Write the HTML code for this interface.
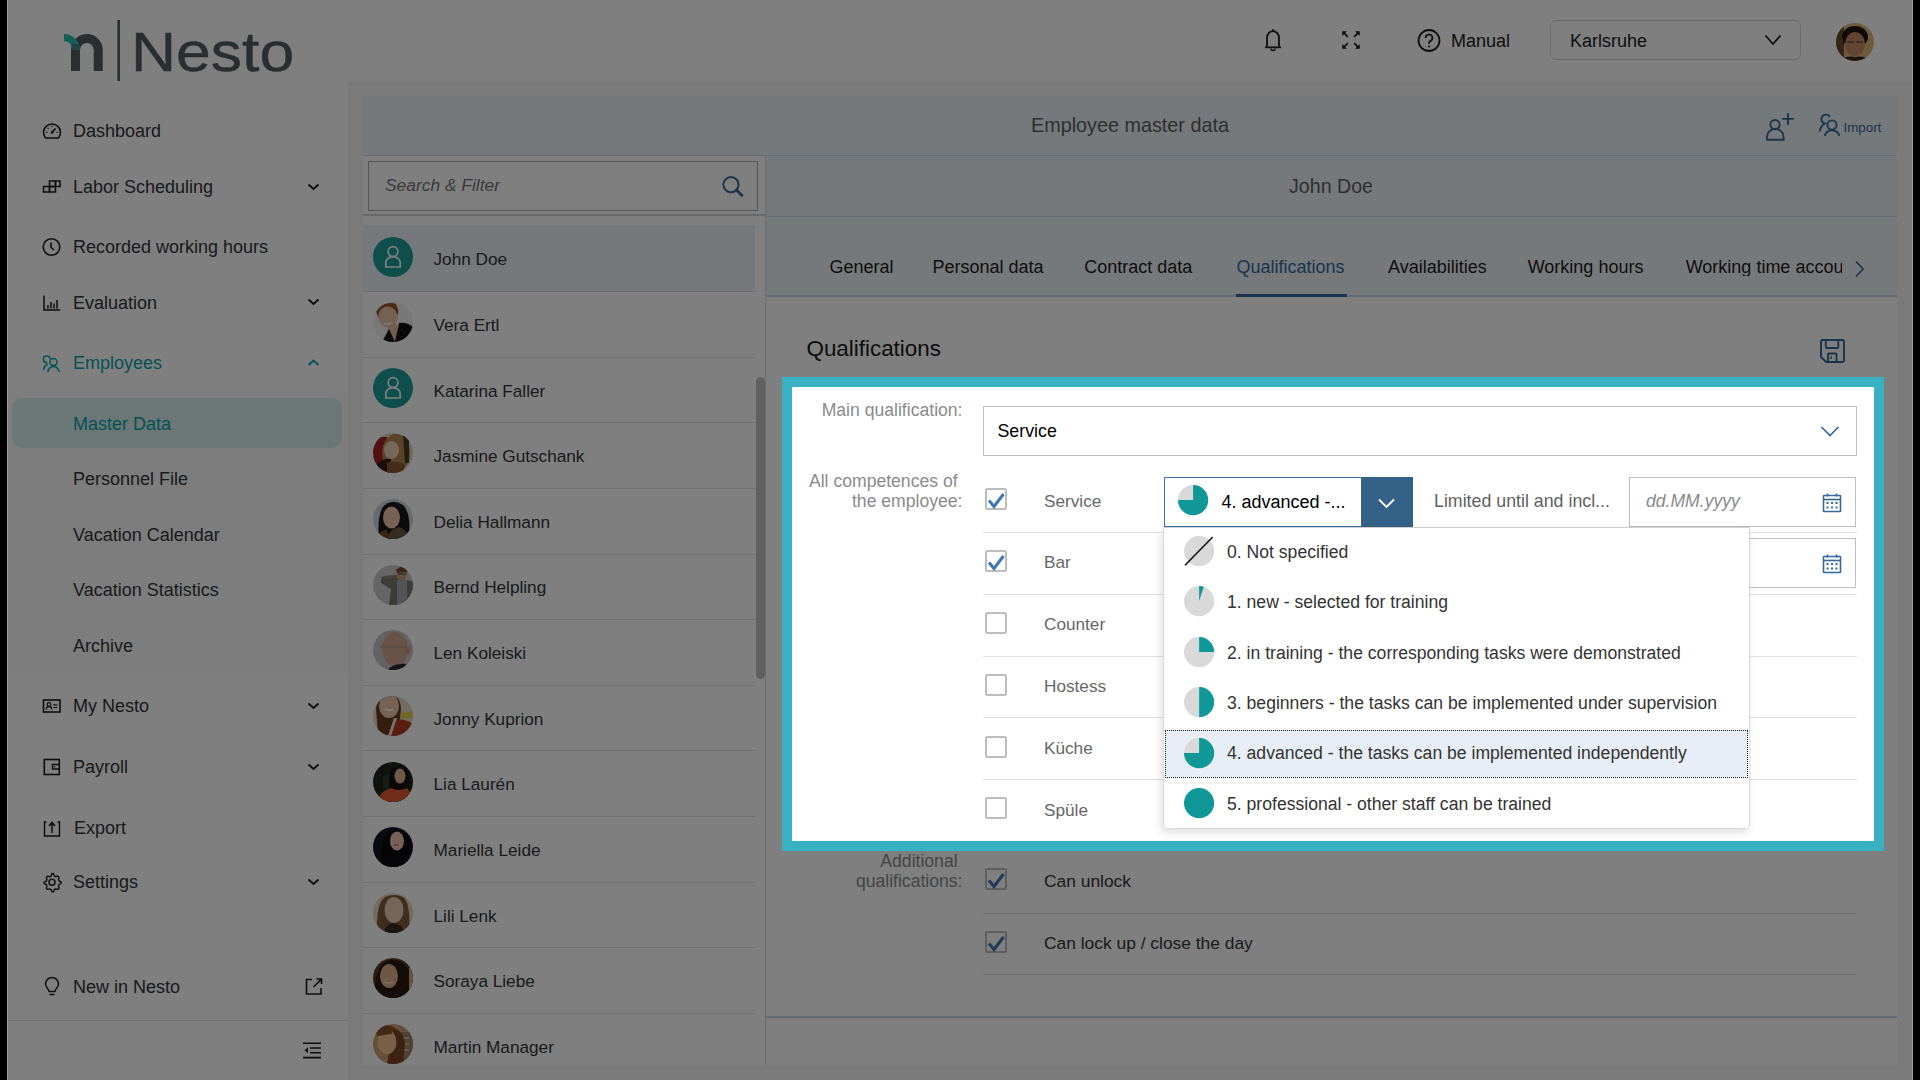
<!DOCTYPE html>
<html><head><meta charset="utf-8"><title>Nesto</title>
<style>
html,body{margin:0;padding:0;width:1920px;height:1080px;overflow:hidden;background:#000;}
body{position:relative;font-family:"Liberation Sans", sans-serif;}
.t{position:absolute;white-space:nowrap;line-height:1;font-family:"Liberation Sans", sans-serif;}
svg{display:block}
</style></head><body>
<div style="position:absolute;left:7.00px;top:0.00px;width:1906.00px;height:1080.00px;background:#fff"></div>
<div style="position:absolute;left:348.00px;top:81.00px;width:1565.00px;height:999.00px;background:#f4f4f4"></div>
<div style="position:absolute;left:7.00px;top:392.00px;width:341.00px;height:283.00px;background:#fbfbfb"></div>
<svg style="position:absolute;left:60.00px;top:18.00px;" width="70" height="66" viewBox="0 0 70 66">
<defs><clipPath id="lgclip"><path d="M4 19.5 A12.5 12.5 0 0 1 16.5 32" fill="none" stroke="#000" stroke-width="7"/></clipPath></defs>
<path d="M15.5 53 V31.9 A11.375 11.375 0 0 1 38.25 31.9 V53" fill="none" stroke="#525d61" stroke-width="9"/>
<path d="M4 19.5 A12.5 12.5 0 0 1 16.5 32" fill="none" stroke="#28bdb9" stroke-width="7"/>
<path d="M4 19.5 A12.5 12.5 0 0 1 16.5 32 V53" fill="none" stroke="#3c7d80" stroke-width="0"/>
<rect x="57.4" y="2" width="2.6" height="61" fill="#525d61"/>
</svg>
<svg style="position:absolute;left:60.00px;top:18.00px;" width="70" height="66" viewBox="0 0 70 66"><path d="M11 26 L20 26 L20 34 L11 34 z" fill="#3e8a8e" clip-path="url(#lgclip2)"/><defs><clipPath id="lgclip2"><path d="M4 16 A16 16 0 0 1 20 32 L13 32 A9 9 0 0 0 4 23 z"/></clipPath></defs></svg>
<div class="t" style="left:130.5px;top:18.6px;font-size:56px;line-height:66px;color:#525d61;-webkit-text-stroke:0.45px #525d61;transform:scaleX(1.115);transform-origin:left">Nesto</div>
<svg style="position:absolute;left:1262.00px;top:27.00px;" width="22" height="26" viewBox="0 0 22 26"><path d="M5 19.5 V10.5 a6 6.3 0 0 1 12 0 V19.5" fill="none" stroke="#1d1d1d" stroke-width="1.8"/><path d="M3 20.3 H19" stroke="#1d1d1d" stroke-width="1.8"/><path d="M9 21.5 a2 2 0 0 0 4 0" fill="none" stroke="#1d1d1d" stroke-width="1.6"/><path d="M11 2.3v2" stroke="#1d1d1d" stroke-width="1.8"/></svg>
<svg style="position:absolute;left:1341.00px;top:30.00px;" width="20" height="20" viewBox="0 0 20 20"><g stroke="#1d1d1d" stroke-width="1.7" fill="none"><path d="M2.2 2.2 L6.8 6.8 M17.8 2.2 L13.2 6.8 M2.2 17.8 L6.8 13.2 M17.8 17.8 L13.2 13.2"/></g><g fill="#1d1d1d"><path d="M1.3 1.3 H6 L1.3 6 z"/><path d="M18.7 1.3 H14 L18.7 6 z"/><path d="M1.3 18.7 H6 L1.3 14 z"/><path d="M18.7 18.7 H14 L18.7 14 z"/></g></svg>
<svg style="position:absolute;left:1416.00px;top:28.00px;" width="26" height="26" viewBox="0 0 26 26"><circle cx="13" cy="12.5" r="10.5" fill="none" stroke="#1d1d1d" stroke-width="1.8"/><path d="M9.6 10 a3.4 3.4 0 1 1 4.6 3.1 c-0.9 0.4 -1.2 1 -1.2 2 v0.6" fill="none" stroke="#1d1d1d" stroke-width="1.7"/><circle cx="13" cy="18.4" r="1" fill="#1d1d1d"/></svg>
<div class="t " style="left:1451.00px;top:31.76px;font-size:18px;color:#1d1d1d;">Manual</div>
<div style="position:absolute;left:1550.00px;top:20.00px;width:251.00px;height:40.00px;box-sizing:border-box;border:1px solid #d6d6d6;border-radius:6px;background:#fff"></div>
<div class="t " style="left:1570.00px;top:31.76px;font-size:18px;color:#1d1d1d;">Karlsruhe</div>
<svg style="position:absolute;left:1764.00px;top:34.00px;" width="18" height="12" viewBox="0 0 18 12"><path d="M1.5 1.5 L9 10 L16.5 1.5" fill="none" stroke="#1d1d1d" stroke-width="1.8"/></svg>
<svg style="position:absolute;left:1836.00px;top:23.00px;" width="38" height="38" viewBox="0 0 38 38"><defs><clipPath id="uav"><circle cx="19" cy="19" r="19"/></clipPath></defs><g clip-path="url(#uav)"><rect width="38" height="38" fill="#d9b878"/><rect x="0" y="0" width="8" height="38" fill="#6a4a2a"/><ellipse cx="19" cy="14" rx="13" ry="11" fill="#1e1410"/><ellipse cx="19" cy="21" rx="10" ry="12" fill="#c48a66"/><path d="M11 19 h7 M20 19 h7" stroke="#3a2a22" stroke-width="1.2"/><path d="M2 38 Q10 32 19 34 Q28 32 36 38 z" fill="#3a2418"/></g></svg>
<div style="position:absolute;left:12.00px;top:398.00px;width:330.00px;height:50.00px;background:#d4efed;border-radius:10px"></div>
<div class="t " style="left:73.00px;top:122.26px;font-size:18px;color:#32363a;">Dashboard</div>
<div class="t " style="left:73.00px;top:177.76px;font-size:18px;color:#32363a;">Labor Scheduling</div>
<svg style="position:absolute;left:306.00px;top:181.50px;" width="15" height="10" viewBox="0 0 15 10"><path d="M2.5 2.5 L7.5 7 L12.5 2.5" fill="none" stroke="#1d1d1d" stroke-width="2"/></svg>
<div class="t " style="left:73.00px;top:238.06px;font-size:18px;color:#32363a;">Recorded working hours</div>
<div class="t " style="left:73.00px;top:293.66px;font-size:18px;color:#32363a;">Evaluation</div>
<svg style="position:absolute;left:306.00px;top:297.40px;" width="15" height="10" viewBox="0 0 15 10"><path d="M2.5 2.5 L7.5 7 L12.5 2.5" fill="none" stroke="#1d1d1d" stroke-width="2"/></svg>
<div class="t " style="left:73.00px;top:354.16px;font-size:18px;color:#0aa4ad;">Employees</div>
<svg style="position:absolute;left:306.00px;top:357.90px;" width="15" height="10" viewBox="0 0 15 10"><path d="M2.5 7 L7.5 2.5 L12.5 7" fill="none" stroke="#0aa4ad" stroke-width="2"/></svg>
<div class="t " style="left:73.00px;top:414.76px;font-size:18px;color:#0aa4ad;">Master Data</div>
<div class="t " style="left:73.00px;top:470.36px;font-size:18px;color:#32363a;">Personnel File</div>
<div class="t " style="left:73.00px;top:525.56px;font-size:18px;color:#32363a;">Vacation Calendar</div>
<div class="t " style="left:73.00px;top:581.16px;font-size:18px;color:#32363a;">Vacation Statistics</div>
<div class="t " style="left:73.00px;top:636.76px;font-size:18px;color:#32363a;">Archive</div>
<div class="t " style="left:73.00px;top:697.16px;font-size:18px;color:#32363a;">My Nesto</div>
<svg style="position:absolute;left:306.00px;top:700.90px;" width="15" height="10" viewBox="0 0 15 10"><path d="M2.5 2.5 L7.5 7 L12.5 2.5" fill="none" stroke="#1d1d1d" stroke-width="2"/></svg>
<div class="t " style="left:73.00px;top:757.96px;font-size:18px;color:#32363a;">Payroll</div>
<svg style="position:absolute;left:306.00px;top:761.70px;" width="15" height="10" viewBox="0 0 15 10"><path d="M2.5 2.5 L7.5 7 L12.5 2.5" fill="none" stroke="#1d1d1d" stroke-width="2"/></svg>
<div class="t " style="left:74.00px;top:818.56px;font-size:18px;color:#32363a;">Export</div>
<div class="t " style="left:73.00px;top:873.06px;font-size:18px;color:#32363a;">Settings</div>
<svg style="position:absolute;left:306.00px;top:876.80px;" width="15" height="10" viewBox="0 0 15 10"><path d="M2.5 2.5 L7.5 7 L12.5 2.5" fill="none" stroke="#1d1d1d" stroke-width="2"/></svg>
<div class="t " style="left:73.00px;top:977.96px;font-size:18px;color:#32363a;">New in Nesto</div>
<svg style="position:absolute;left:41.00px;top:120.00px;" width="22" height="22" viewBox="0 0 22 22"><path d="M4.5 18 a8.5 8.5 0 1 1 13 0 z" fill="none" stroke="#1d1d1d" stroke-width="1.6" stroke-linejoin="round"/><path d="M11 12.5 L14.5 8.5" stroke="#1d1d1d" stroke-width="1.8"/><circle cx="11" cy="12.5" r="1.3" fill="#1d1d1d"/><path d="M11 5.8v1.2 M6.8 7.8l.8.8 M5.3 12.3h1.2 M15.5 12.3h1.2" stroke="#1d1d1d" stroke-width="1.2"/></svg>
<svg style="position:absolute;left:41.00px;top:176.00px;" width="22" height="22" viewBox="0 0 22 22"><g fill="none" stroke="#1d1d1d" stroke-width="1.5"><rect x="2.5" y="10.5" width="6" height="5.5"/><rect x="8.5" y="10.5" width="6" height="5.5"/><rect x="8.5" y="5" width="6" height="5.5"/><rect x="14.5" y="5" width="4.5" height="5.5"/></g></svg>
<svg style="position:absolute;left:41.00px;top:236.00px;" width="22" height="22" viewBox="0 0 22 22"><circle cx="10.5" cy="11" r="8.3" fill="none" stroke="#1d1d1d" stroke-width="1.6"/><path d="M10 6.5 V11.5 L13 14" fill="none" stroke="#1d1d1d" stroke-width="1.6"/></svg>
<svg style="position:absolute;left:41.00px;top:292.00px;" width="22" height="22" viewBox="0 0 22 22"><path d="M3 3.5 V18 H19" fill="none" stroke="#1d1d1d" stroke-width="1.5"/><path d="M7 13v3.5 M10 10v6.5 M13 11.5v5 M16 8v8.5" stroke="#1d1d1d" stroke-width="1.5"/></svg>
<svg style="position:absolute;left:41.00px;top:352.00px;" width="22" height="22" viewBox="0 0 22 22"><g fill="none" stroke="#0aa4ad" stroke-width="1.5"><path d="M9 7 a3.3 3.3 0 1 0 -3 3.6 M2.5 18 c0.5 -3 2 -5 4.5 -6"/><circle cx="12.5" cy="10" r="3.5"/><path d="M7 20 a5.5 5.5 0 0 1 11 0"/></g></svg>
<svg style="position:absolute;left:41.00px;top:695.00px;" width="22" height="22" viewBox="0 0 22 22"><rect x="2.5" y="5" width="16.5" height="12" fill="none" stroke="#1d1d1d" stroke-width="1.6"/><circle cx="8" cy="9.5" r="1.8" fill="none" stroke="#1d1d1d" stroke-width="1.2"/><path d="M5.2 14.5 a2.8 2.8 0 0 1 5.6 0" fill="none" stroke="#1d1d1d" stroke-width="1.2"/><path d="M12.3 9.8h4 M12.3 12.5h4" stroke="#1d1d1d" stroke-width="1.2"/></svg>
<svg style="position:absolute;left:41.00px;top:756.00px;" width="22" height="22" viewBox="0 0 22 22"><rect x="3.3" y="3.5" width="15" height="15" fill="none" stroke="#1d1d1d" stroke-width="1.6"/><path d="M18.3 8.5 H11.5 V13 H18.3" fill="none" stroke="#1d1d1d" stroke-width="1.4"/><circle cx="13.5" cy="10.8" r=".8" fill="#1d1d1d"/></svg>
<svg style="position:absolute;left:41.00px;top:817.00px;" width="22" height="22" viewBox="0 0 22 22"><path d="M5.5 5 H3.5 V19 H18.5 V5 H16.5" fill="none" stroke="#1d1d1d" stroke-width="1.5"/><path d="M11 16 V6 M8 9 L11 5.5 L14 9" fill="none" stroke="#1d1d1d" stroke-width="1.5"/></svg>
<svg style="position:absolute;left:41.00px;top:871.00px;" width="22" height="22" viewBox="0 0 22 22"><path d="M11 2.5 l1.6 .2 .6 2.1 1.6 .9 2.1 -.7 1.1 1.2 -.5 2.1 .6 1.7 2 .9 v1.7 l-2 .8 -.6 1.7 .6 2.1 -1.2 1.2 -2.1 -.6 -1.6 .9 -.6 2.1 h-1.7 l-.7 -2.1 -1.6 -.9 -2.1 .6 -1.2 -1.2 .6 -2.1 -.6 -1.6 -2.1 -.8 v-1.7 l2.1 -.8 .6 -1.7 -.6 -2.1 1.2 -1.2 2.1 .6 1.6 -.9 .7 -2.1 z" fill="none" stroke="#1d1d1d" stroke-width="1.4" stroke-linejoin="round"/><circle cx="11" cy="11.3" r="3" fill="none" stroke="#1d1d1d" stroke-width="1.5"/></svg>
<svg style="position:absolute;left:41.00px;top:976.00px;" width="22" height="22" viewBox="0 0 22 22"><path d="M8 15.5 c0 -2.5 -3.5 -4 -3.5 -7.5 a6.5 6.5 0 0 1 13 0 c0 3.5 -3.5 5 -3.5 7.5 z" fill="none" stroke="#1d1d1d" stroke-width="1.5" stroke-linejoin="round"/><path d="M8.5 18.5 h5" stroke="#1d1d1d" stroke-width="1.5"/></svg>
<svg style="position:absolute;left:303.00px;top:976.00px;" width="22" height="22" viewBox="0 0 22 22"><path d="M9 3.5 H3.5 V18 H18 V12" fill="none" stroke="#1d1d1d" stroke-width="1.6"/><path d="M10.5 11 L18 3.5 M13.5 3 H18.5 V8" fill="none" stroke="#1d1d1d" stroke-width="1.6"/></svg>
<div style="position:absolute;left:7.00px;top:1020.00px;width:341.00px;height:1.00px;background:#e2e2e2"></div>
<svg style="position:absolute;left:301.00px;top:1040.00px;" width="24" height="22" viewBox="0 0 24 22"><path d="M2 3.2 H20 M9 8 H20 M9 12.7 H20 M2 17.6 H20" stroke="#1d1d1d" stroke-width="1.6"/><path d="M7 7.3 L3.5 10.3 L7 13.3 z" fill="#1d1d1d"/></svg>
<div style="position:absolute;left:363.00px;top:96.00px;width:1534.00px;height:60.00px;background:#edf3f9;border-bottom:1px solid #cbd8ea;box-sizing:border-box"></div>
<div class="t " style="left:1031.00px;top:116.14px;font-size:19.8px;color:#5b5f63;">Employee master data</div>
<svg style="position:absolute;left:1762.00px;top:110.00px;" width="36" height="34" viewBox="0 0 36 34"><g fill="none" stroke="#35689c" stroke-width="1.9"><circle cx="13" cy="14.6" r="4.6"/><path d="M5 29.8 V27 a8.3 8.3 0 0 1 16.6 0 V29.8 z"/><path d="M26 3 V14.8 M20.2 8.9 H31.8"/></g></svg>
<svg style="position:absolute;left:1815.00px;top:112.00px;" width="30" height="28" viewBox="0 0 30 28"><g fill="none" stroke="#35689c" stroke-width="1.9"><circle cx="17" cy="13" r="4.6"/><path d="M9.8 24 a7.5 7.5 0 0 1 14.5 0"/><path d="M14.8 5 a4.5 4.5 0 1 0 -5 6.5 c-2.5 1.2 -4.5 4 -5 8"/></g></svg>
<div class="t " style="left:1843.50px;top:121.36px;font-size:13.4px;color:#35689c;">Import</div>
<div style="position:absolute;left:363.00px;top:156.00px;width:402.00px;height:909.00px;background:#fff"></div>
<div style="position:absolute;left:765.00px;top:156.00px;width:1.00px;height:909.00px;background:#d9d9d9"></div>
<div style="position:absolute;left:368px;top:161px;width:390px;height:50px;box-sizing:border-box;border:1px solid #a9abad;background:#fff"></div>
<div class="t " style="left:385.00px;top:176.87px;font-size:17.4px;color:#74777a;font-style:italic">Search &amp; Filter</div>
<svg style="position:absolute;left:718.00px;top:172.00px;" width="30" height="30" viewBox="0 0 30 30"><circle cx="13" cy="12.6" r="7.6" fill="none" stroke="#35689c" stroke-width="2"/><path d="M18.5 18 L24 23.5" stroke="#35689c" stroke-width="2.6" stroke-linecap="round"/></svg>
<div style="position:absolute;left:363.00px;top:214.00px;width:402.00px;height:2.00px;background:#cfd1d3"></div>
<div style="position:absolute;left:363.00px;top:225.30px;width:391.50px;height:66.60px;background:#edf3f9"></div>
<div style="position:absolute;left:373px;top:236.61px;width:40px;height:40px;border-radius:50%;background:#1c9e9c"></div>
<svg style="position:absolute;left:373.00px;top:236.61px;" width="40" height="40" viewBox="0 0 40 40"><g fill="none" stroke="#fff" stroke-width="1.7"><circle cx="20" cy="14.6" r="4.9"/><path d="M12.8 30 V25.5 a7.2 5.8 0 0 1 14.4 0 V30 z"/></g></svg>
<div class="t " style="left:433.50px;top:251.34px;font-size:17.2px;color:#32363a;">John Doe</div>
<div style="position:absolute;left:363.00px;top:291.02px;width:391.50px;height:1.00px;background:#e1e1e1"></div>
<svg style="position:absolute;left:373.00px;top:302.23px;" width="40" height="40" viewBox="0 0 40 40"><defs><clipPath id="avc1"><circle cx="20" cy="20" r="20"/></clipPath></defs><g clip-path="url(#avc1)"><rect width="40" height="40" fill="#f0f0f0"/><path d="M3 10 Q8 0 20 1 Q26 2 25 12 L22 18 L6 16 z" fill="#9a5232"/><ellipse cx="15" cy="15" rx="9.5" ry="10.5" fill="#eac2a6" transform="rotate(-15 15 15)"/><path d="M11 21 q4 3 8 -1" stroke="#fff" stroke-width="1.5" fill="none"/><path d="M15 24 L24 22 L26 40 L14 40 z" fill="#e6b898"/><path d="M9 40 L16 27 L22 40 z M22 40 L26 21 Q34 20 40 25 V40 z" fill="#121212"/></g></svg>
<div class="t " style="left:433.50px;top:316.96px;font-size:17.2px;color:#32363a;">Vera Ertl</div>
<div style="position:absolute;left:363.00px;top:356.64px;width:391.50px;height:1.00px;background:#e1e1e1"></div>
<div style="position:absolute;left:373px;top:367.85px;width:40px;height:40px;border-radius:50%;background:#1c9e9c"></div>
<svg style="position:absolute;left:373.00px;top:367.85px;" width="40" height="40" viewBox="0 0 40 40"><g fill="none" stroke="#fff" stroke-width="1.7"><circle cx="20" cy="14.6" r="4.9"/><path d="M12.8 30 V25.5 a7.2 5.8 0 0 1 14.4 0 V30 z"/></g></svg>
<div class="t " style="left:433.50px;top:382.58px;font-size:17.2px;color:#32363a;">Katarina Faller</div>
<div style="position:absolute;left:363.00px;top:422.26px;width:391.50px;height:1.00px;background:#e1e1e1"></div>
<svg style="position:absolute;left:373.00px;top:433.47px;" width="40" height="40" viewBox="0 0 40 40"><defs><clipPath id="avc3"><circle cx="20" cy="20" r="20"/></clipPath></defs><g clip-path="url(#avc3)"><rect width="40" height="40" fill="#ddd4bc"/><path d="M0 4 H14 L12 30 L4 40 H0 z" fill="#a82226"/><ellipse cx="23" cy="20" rx="14" ry="19" fill="#b5864e"/><path d="M30 2 L36 4 L36 30 L32 30 z" fill="#4a3a2a"/><ellipse cx="18.5" cy="17" rx="7.5" ry="9" fill="#ecd0b0"/><path d="M2 34 Q8 24 18 26 L16 40 H2 z" fill="#3a1818"/><path d="M14 30 Q24 26 32 32 L30 40 L14 40 z" fill="#8a5a36"/></g></svg>
<div class="t " style="left:433.50px;top:448.20px;font-size:17.2px;color:#32363a;">Jasmine Gutschank</div>
<div style="position:absolute;left:363.00px;top:487.88px;width:391.50px;height:1.00px;background:#e1e1e1"></div>
<svg style="position:absolute;left:373.00px;top:499.09px;" width="40" height="40" viewBox="0 0 40 40"><defs><clipPath id="avc4"><circle cx="20" cy="20" r="20"/></clipPath></defs><g clip-path="url(#avc4)"><rect width="40" height="40" fill="#cfd6de"/><path d="M6 40 Q4 20 9 9 Q18 -2 30 6 Q38 14 36 36 L30 40 z" fill="#16161d"/><ellipse cx="18.5" cy="18.5" rx="8.5" ry="11" fill="#ecc2a8"/><path d="M14 40 Q16 30 26 28 Q34 30 36 40 z" fill="#6b5a3c"/><path d="M6 34 L14 30 L16 40 L8 40 z" fill="#7a4a26"/></g></svg>
<div class="t " style="left:433.50px;top:513.82px;font-size:17.2px;color:#32363a;">Delia Hallmann</div>
<div style="position:absolute;left:363.00px;top:553.50px;width:391.50px;height:1.00px;background:#e1e1e1"></div>
<svg style="position:absolute;left:373.00px;top:564.71px;" width="40" height="40" viewBox="0 0 40 40"><defs><clipPath id="avc5"><circle cx="20" cy="20" r="20"/></clipPath></defs><g clip-path="url(#avc5)"><rect width="40" height="40" fill="#cbcbcb"/><path d="M8 12 Q14 10 24 10 L26 15 L10 16 z" fill="#8a8272"/><path d="M8 14 L26 14 L40 16 L40 40 L16 40 L18 24 L8 18 z" fill="#7d7972"/><path d="M24 15 L34 15 L34 40 L24 40 z" fill="#a6a8b0"/><ellipse cx="29" cy="9" rx="5.5" ry="6.5" fill="#c7a086"/><path d="M23 5 Q28 -1 35 4 L34 7 L24 8 z" fill="#7a4a2a"/><path d="M25 9 h8" stroke="#333" stroke-width="0.8"/></g></svg>
<div class="t " style="left:433.50px;top:579.44px;font-size:17.2px;color:#32363a;">Bernd Helpling</div>
<div style="position:absolute;left:363.00px;top:619.12px;width:391.50px;height:1.00px;background:#e1e1e1"></div>
<svg style="position:absolute;left:373.00px;top:630.33px;" width="40" height="40" viewBox="0 0 40 40"><defs><clipPath id="avc6"><circle cx="20" cy="20" r="20"/></clipPath></defs><g clip-path="url(#avc6)"><rect width="40" height="40" fill="#c6c6c6"/><ellipse cx="22" cy="19" rx="13" ry="17" fill="#d2a58e"/><ellipse cx="35" cy="20" rx="2.5" ry="4" fill="#c99a84"/><path d="M7 17 H34" stroke="#8d8d8d" stroke-width="0.9"/><path d="M14 40 Q20 34 28 34 Q34 32 36 40 z" fill="#2b2b2b"/><path d="M8 36 L16 34 L16 40 L10 40 z" fill="#b9c0c6"/></g></svg>
<div class="t " style="left:433.50px;top:645.06px;font-size:17.2px;color:#32363a;">Len Koleiski</div>
<div style="position:absolute;left:363.00px;top:684.74px;width:391.50px;height:1.00px;background:#e1e1e1"></div>
<svg style="position:absolute;left:373.00px;top:695.95px;" width="40" height="40" viewBox="0 0 40 40"><defs><clipPath id="avc7"><circle cx="20" cy="20" r="20"/></clipPath></defs><g clip-path="url(#avc7)"><rect width="40" height="40" fill="#e6d8c2"/><path d="M28 17 L40 15 L40 22 L28 23 z" fill="#e2cf48"/><path d="M5 40 L3 12 Q6 -2 18 -1 Q28 0 28 14 L26 30 L14 40 z" fill="#6a3a1e"/><ellipse cx="16" cy="10" rx="10" ry="12" fill="#efc6a6"/><path d="M12 13 q4 3 8 0" stroke="#fff" stroke-width="1.6" fill="none"/><path d="M16 40 L22 24 Q32 22 40 28 V40 z" fill="#b53a24"/><path d="M15 40 L21 22 L24 22 L18 40 z" fill="#ede4d8"/></g></svg>
<div class="t " style="left:433.50px;top:710.68px;font-size:17.2px;color:#32363a;">Jonny Kuprion</div>
<div style="position:absolute;left:363.00px;top:750.36px;width:391.50px;height:1.00px;background:#e1e1e1"></div>
<svg style="position:absolute;left:373.00px;top:761.57px;" width="40" height="40" viewBox="0 0 40 40"><defs><clipPath id="avc8"><circle cx="20" cy="20" r="20"/></clipPath></defs><g clip-path="url(#avc8)"><rect width="40" height="40" fill="#1b2519"/><path d="M16 40 Q14 20 18 8 Q26 0 34 8 Q38 20 34 40 z" fill="#17100c"/><ellipse cx="27" cy="14" rx="5.5" ry="7.5" fill="#e2b292"/><path d="M4 40 Q8 28 18 26 Q26 30 34 26 Q38 30 40 40 z" fill="#e05a34"/><path d="M10 14 L16 12 L16 26 L10 26 z" fill="#2e3a30"/></g></svg>
<div class="t " style="left:433.50px;top:776.30px;font-size:17.2px;color:#32363a;">Lia Laur&eacute;n</div>
<div style="position:absolute;left:363.00px;top:815.98px;width:391.50px;height:1.00px;background:#e1e1e1"></div>
<svg style="position:absolute;left:373.00px;top:827.19px;" width="40" height="40" viewBox="0 0 40 40"><defs><clipPath id="avc9"><circle cx="20" cy="20" r="20"/></clipPath></defs><g clip-path="url(#avc9)"><rect width="40" height="40" fill="#101325"/><path d="M8 30 Q8 6 22 2 Q36 2 38 20 L36 40 L12 40 z" fill="#09090e"/><ellipse cx="24" cy="14" rx="7" ry="9.5" fill="#efc0ae"/><path d="M21 18 h5" stroke="#c0404a" stroke-width="1.2"/><path d="M6 40 Q12 28 24 28 Q34 28 40 36 V40 z" fill="#0d0d10"/></g></svg>
<div class="t " style="left:433.50px;top:841.92px;font-size:17.2px;color:#32363a;">Mariella Leide</div>
<div style="position:absolute;left:363.00px;top:881.60px;width:391.50px;height:1.00px;background:#e1e1e1"></div>
<svg style="position:absolute;left:373.00px;top:892.81px;" width="40" height="40" viewBox="0 0 40 40"><defs><clipPath id="avc10"><circle cx="20" cy="20" r="20"/></clipPath></defs><g clip-path="url(#avc10)"><rect width="40" height="40" fill="#e6d6b8"/><path d="M4 40 Q3 10 12 4 Q21 0 30 4 Q38 10 36 40 z" fill="#7d5c3a"/><ellipse cx="21" cy="17" rx="9.5" ry="13" fill="#edcbb2"/><path d="M10 40 Q14 30 20 30 Q28 30 32 40 z" fill="#3a2a22"/></g></svg>
<div class="t " style="left:433.50px;top:907.54px;font-size:17.2px;color:#32363a;">Lili Lenk</div>
<div style="position:absolute;left:363.00px;top:947.22px;width:391.50px;height:1.00px;background:#e1e1e1"></div>
<svg style="position:absolute;left:373.00px;top:958.43px;" width="40" height="40" viewBox="0 0 40 40"><defs><clipPath id="avc11"><circle cx="20" cy="20" r="20"/></clipPath></defs><g clip-path="url(#avc11)"><rect width="40" height="40" fill="#5a3b24"/><path d="M2 40 Q0 8 16 2 Q34 0 38 20 L36 40 z" fill="#2c180e"/><ellipse cx="16" cy="18" rx="9" ry="12" fill="#dcaf8e"/><path d="M12 24 q4 2.5 8 0" stroke="#f5e6dc" stroke-width="1.2" fill="none"/><path d="M36 10 L40 10 L40 40 L36 40 z" fill="#c9a888"/></g></svg>
<div class="t " style="left:433.50px;top:973.16px;font-size:17.2px;color:#32363a;">Soraya Liebe</div>
<div style="position:absolute;left:363.00px;top:1012.84px;width:391.50px;height:1.00px;background:#e1e1e1"></div>
<svg style="position:absolute;left:373.00px;top:1024.05px;" width="40" height="40" viewBox="0 0 40 40"><defs><clipPath id="avc12"><circle cx="20" cy="20" r="20"/></clipPath></defs><g clip-path="url(#avc12)"><rect width="40" height="40" fill="#caa072"/><path d="M28 8 L40 8 L40 40 L28 40 z" fill="#9b8468"/><path d="M30 14 h6 M30 20 h6 M30 26 h6" stroke="#d8c8a8" stroke-width="1.5"/><path d="M14 40 Q18 16 20 4 Q30 6 32 20 L30 40 z" fill="#7a4222"/><ellipse cx="14" cy="18" rx="9.5" ry="12.5" fill="#efc08e"/><path d="M2 4 Q10 -2 22 4 L18 10 L4 12 z" fill="#8a4e2a"/></g></svg>
<div class="t " style="left:433.50px;top:1038.78px;font-size:17.2px;color:#32363a;">Martin Manager</div>
<div style="position:absolute;left:755.50px;top:377.00px;width:9.50px;height:302.00px;background:#c0c0c0;border-radius:5px"></div>
<div style="position:absolute;left:766.00px;top:156.00px;width:1131.00px;height:909.00px;background:#fff"></div>
<div style="position:absolute;left:766.00px;top:156.00px;width:1131.00px;height:61.00px;background:#edf3f9;border-bottom:1px solid #cbd8ea;box-sizing:border-box"></div>
<div class="t" style="left:831.00px;width:1000px;text-align:center;top:176.71px;font-size:19.6px;color:#5b5f63;">John Doe</div>
<div style="position:absolute;left:766.00px;top:217.00px;width:1131.00px;height:80.00px;background:#edf3f9;border-bottom:2px solid #cbd8ea;box-sizing:border-box"></div>
<div class="t " style="left:829.50px;top:258.06px;font-size:18px;color:#1d1d1d;">General</div>
<div class="t " style="left:932.50px;top:258.06px;font-size:18px;color:#1d1d1d;">Personal data</div>
<div class="t " style="left:1084.30px;top:258.06px;font-size:18px;color:#1d1d1d;">Contract data</div>
<div class="t " style="left:1236.50px;top:258.06px;font-size:18px;color:#35689c;">Qualifications</div>
<div class="t " style="left:1388.00px;top:258.06px;font-size:18px;color:#1d1d1d;">Availabilities</div>
<div class="t " style="left:1527.70px;top:258.06px;font-size:18px;color:#1d1d1d;">Working hours</div>
<div class="t" style="left:1685.7px;top:257.96px;font-size:18px;color:#1d1d1d;width:156px;overflow:hidden">Working time accou</div>
<div style="position:absolute;left:1236.00px;top:294.00px;width:111.00px;height:3.00px;background:#35689c"></div>
<svg style="position:absolute;left:1852.00px;top:258.00px;" width="14" height="22" viewBox="0 0 14 22"><path d="M4 3.5 L11 11 L4 18.5" fill="none" stroke="#35689c" stroke-width="1.7"/></svg>
<div class="t " style="left:806.50px;top:338.24px;font-size:22.4px;color:#1a1a1a;">Qualifications</div>
<svg style="position:absolute;left:1818.00px;top:336.00px;" width="28" height="28" viewBox="0 0 28 28"><g fill="none" stroke="#35689c" stroke-width="1.9" stroke-linejoin="round"><path d="M4.5 4 H24.5 a1.5 1.5 0 0 1 1.5 1.5 V24.5 a1.5 1.5 0 0 1 -1.5 1.5 H8.2 L3 21 V5.5 A1.5 1.5 0 0 1 4.5 4 z"/><rect x="7.8" y="4" width="12.5" height="8" rx="1"/><rect x="10" y="17.5" width="8.5" height="8.5" rx="1"/></g><path d="M13 20.2v2.8" stroke="#35689c" stroke-width="1.6"/></svg>
<div style="position:absolute;left:766.00px;top:1016.00px;width:1131.00px;height:1.50px;background:#c4d2e4"></div>
<div class="t" style="right:957.50px;top:852.60px;font-size:17.6px;color:#8a8b8c;">Additional&nbsp;</div>
<div class="t" style="right:957.50px;top:873.10px;font-size:17.6px;color:#8a8b8c;">qualifications:</div>
<div style="position:absolute;left:985px;top:868.40px;width:22px;height:22px;box-sizing:border-box;border:2px solid #bdbdbd;border-radius:2px;background:#fff"></div>
<svg style="position:absolute;left:985.00px;top:868.40px;" width="22" height="22" viewBox="0 0 22 22"><path d="M4 12.5 L9 18.5 L18.5 6" fill="none" stroke="#3d78b4" stroke-width="3" stroke-linejoin="miter"/></svg>
<div class="t " style="left:1044.00px;top:872.87px;font-size:17.4px;color:#32363a;">Can unlock</div>
<div style="position:absolute;left:983.00px;top:912.60px;width:874.00px;height:1.00px;background:#e1e1e1"></div>
<div style="position:absolute;left:985px;top:930.70px;width:22px;height:22px;box-sizing:border-box;border:2px solid #bdbdbd;border-radius:2px;background:#fff"></div>
<svg style="position:absolute;left:985.00px;top:930.70px;" width="22" height="22" viewBox="0 0 22 22"><path d="M4 12.5 L9 18.5 L18.5 6" fill="none" stroke="#3d78b4" stroke-width="3" stroke-linejoin="miter"/></svg>
<div class="t " style="left:1044.00px;top:934.87px;font-size:17.4px;color:#32363a;">Can lock up / close the day</div>
<div style="position:absolute;left:983.00px;top:973.60px;width:874.00px;height:1.00px;background:#e1e1e1"></div>
<div style="position:absolute;left:782px;top:377.4px;width:1102px;height:473.4px;box-sizing:border-box;border:10px solid #38b2c3;box-shadow:0 0 0 3000px rgba(0,0,0,0.5);z-index:50"></div>
<div id="hl" style="position:absolute;left:0;top:0;width:1920px;height:1080px;z-index:60;pointer-events:none">
<div style="position:absolute;left:792.00px;top:387.40px;width:1082.00px;height:453.00px;background:#fff"></div>
<div class="t" style="right:957.50px;top:402.20px;font-size:17.6px;color:#8a8b8c;">Main qualification:</div>
<div class="t" style="right:957.50px;top:473.00px;font-size:17.6px;color:#8a8b8c;">All competences of&nbsp;</div>
<div class="t" style="right:957.50px;top:492.80px;font-size:17.6px;color:#8a8b8c;">the employee:</div>
<div style="position:absolute;left:983px;top:406px;width:873.5px;height:50px;box-sizing:border-box;border:1px solid #bfbfbf;background:#fff"></div>
<div class="t " style="left:997.50px;top:422.83px;font-size:17.8px;color:#000;">Service</div>
<svg style="position:absolute;left:1819.00px;top:424.00px;" width="22" height="16" viewBox="0 0 22 16"><path d="M2.5 3 L11 11.5 L19.5 3" fill="none" stroke="#35689c" stroke-width="1.7"/></svg>
<div style="position:absolute;left:985px;top:488.30px;width:22px;height:22px;box-sizing:border-box;border:2px solid #bdbdbd;border-radius:2px;background:#fff"></div>
<svg style="position:absolute;left:985.00px;top:488.30px;" width="22" height="22" viewBox="0 0 22 22"><path d="M4 12.5 L9 18.5 L18.5 6" fill="none" stroke="#3d78b4" stroke-width="3" stroke-linejoin="miter"/></svg>
<div class="t " style="left:1044.00px;top:492.54px;font-size:17.2px;color:#666;">Service</div>
<div style="position:absolute;left:983.00px;top:532.00px;width:874.00px;height:1.00px;background:#e1e1e1"></div>
<div style="position:absolute;left:985px;top:550.10px;width:22px;height:22px;box-sizing:border-box;border:2px solid #bdbdbd;border-radius:2px;background:#fff"></div>
<svg style="position:absolute;left:985.00px;top:550.10px;" width="22" height="22" viewBox="0 0 22 22"><path d="M4 12.5 L9 18.5 L18.5 6" fill="none" stroke="#3d78b4" stroke-width="3" stroke-linejoin="miter"/></svg>
<div class="t " style="left:1044.00px;top:554.34px;font-size:17.2px;color:#666;">Bar</div>
<div style="position:absolute;left:983.00px;top:593.80px;width:874.00px;height:1.00px;background:#e1e1e1"></div>
<div style="position:absolute;left:985px;top:611.90px;width:22px;height:22px;box-sizing:border-box;border:2px solid #bdbdbd;border-radius:2px;background:#fff"></div>
<div class="t " style="left:1044.00px;top:616.14px;font-size:17.2px;color:#666;">Counter</div>
<div style="position:absolute;left:983.00px;top:655.60px;width:874.00px;height:1.00px;background:#e1e1e1"></div>
<div style="position:absolute;left:985px;top:673.70px;width:22px;height:22px;box-sizing:border-box;border:2px solid #bdbdbd;border-radius:2px;background:#fff"></div>
<div class="t " style="left:1044.00px;top:677.94px;font-size:17.2px;color:#666;">Hostess</div>
<div style="position:absolute;left:983.00px;top:717.40px;width:874.00px;height:1.00px;background:#e1e1e1"></div>
<div style="position:absolute;left:985px;top:735.50px;width:22px;height:22px;box-sizing:border-box;border:2px solid #bdbdbd;border-radius:2px;background:#fff"></div>
<div class="t " style="left:1044.00px;top:739.74px;font-size:17.2px;color:#666;">K&uuml;che</div>
<div style="position:absolute;left:983.00px;top:779.20px;width:874.00px;height:1.00px;background:#e1e1e1"></div>
<div style="position:absolute;left:985px;top:797.30px;width:22px;height:22px;box-sizing:border-box;border:2px solid #bdbdbd;border-radius:2px;background:#fff"></div>
<div class="t " style="left:1044.00px;top:801.54px;font-size:17.2px;color:#666;">Sp&uuml;le</div>
<div style="position:absolute;left:1629.3px;top:477px;width:1227px;height:50px;box-sizing:border-box;border:1px solid #bfbfbf;background:#fff;width:227px"></div>
<div class="t " style="left:1646.00px;top:492.60px;font-size:17.6px;color:#8a8b8c;font-style:italic">dd.MM.yyyy</div>
<div style="position:absolute;left:1629.3px;top:538.3px;width:227px;height:50px;box-sizing:border-box;border:1px solid #bfbfbf;background:#fff"></div>
<svg style="position:absolute;left:1822.00px;top:491.50px;" width="20" height="21" viewBox="0 0 20 21"><g fill="none" stroke="#35689c" stroke-width="1.6"><rect x="1.5" y="3.5" width="17" height="16" rx="0.5"/><path d="M1.5 7.5 H18.5"/><path d="M5.5 1.5v3 M14.5 1.5v3"/></g><g fill="#35689c"><rect x="4.5" y="10" width="2" height="2"/><rect x="9" y="10" width="2" height="2"/><rect x="13.5" y="10" width="2" height="2"/><rect x="4.5" y="14.5" width="2" height="2"/><rect x="9" y="14.5" width="2" height="2"/><rect x="13.5" y="14.5" width="2" height="2"/></g></svg>
<svg style="position:absolute;left:1822.00px;top:553.00px;" width="20" height="21" viewBox="0 0 20 21"><g fill="none" stroke="#35689c" stroke-width="1.6"><rect x="1.5" y="3.5" width="17" height="16" rx="0.5"/><path d="M1.5 7.5 H18.5"/><path d="M5.5 1.5v3 M14.5 1.5v3"/></g><g fill="#35689c"><rect x="4.5" y="10" width="2" height="2"/><rect x="9" y="10" width="2" height="2"/><rect x="13.5" y="10" width="2" height="2"/><rect x="4.5" y="14.5" width="2" height="2"/><rect x="9" y="14.5" width="2" height="2"/><rect x="13.5" y="14.5" width="2" height="2"/></g></svg>
<div class="t " style="left:1434.00px;top:492.63px;font-size:17.8px;color:#5f5f5f;">Limited until and incl...</div>
<div style="position:absolute;left:1164px;top:476.5px;width:249px;height:50px;box-sizing:border-box;border:1px solid #3f72a6;background:#fff"></div>
<div style="position:absolute;left:1361.00px;top:476.50px;width:52.00px;height:50.00px;background:#346187"></div>
<svg style="position:absolute;left:1376.00px;top:494.00px;" width="22" height="16" viewBox="0 0 22 16"><path d="M3 5.5 L10.5 13 L18 5.5" fill="none" stroke="#fff" stroke-width="1.8"/></svg>
<svg style="position:absolute;left:1177.90px;top:485.20px;overflow:visible" width="30" height="31" viewBox="0 0 30 31"><circle cx="15.1" cy="15.1" r="15.1" fill="#d9d9d9"/><path d="M15.1 15.1 L15.1 0 A15.1 15.1 0 1 1 0.00 15.10 z" fill="#109797"/></svg>
<div class="t " style="left:1221.50px;top:492.96px;font-size:18px;color:#000;">4. advanced -...</div>
<div style="position:absolute;left:1163px;top:526.5px;width:586.5px;height:302px;box-sizing:border-box;border:1px solid #d9d9d9;border-top:1px solid #cfcfcf;border-radius:0 0 5px 5px;background:#fff;box-shadow:-2px 4px 8px rgba(0,0,0,0.12)"></div>
<div style="position:absolute;left:1164.5px;top:730px;width:583.5px;height:47.5px;box-sizing:border-box;border:1px dotted #222;background:#e8eef5"></div>
<svg style="position:absolute;left:1183.90px;top:535.90px;overflow:visible" width="30" height="31" viewBox="0 0 30 31"><circle cx="15.1" cy="15.1" r="15.1" fill="#d9d9d9"/><path d="M1 29.2 L28.7 1" stroke="#111" stroke-width="1.6"/></svg>
<div class="t " style="left:1227.00px;top:543.85px;font-size:17.6px;color:#333;">0. Not specified</div>
<svg style="position:absolute;left:1183.90px;top:586.30px;overflow:visible" width="30" height="31" viewBox="0 0 30 31"><circle cx="15.1" cy="15.1" r="15.1" fill="#d9d9d9"/><path d="M15.1 15.1 L15.1 0 A15.1 15.1 0 0 1 19.77 0.74 z" fill="#109797"/></svg>
<div class="t " style="left:1227.00px;top:594.25px;font-size:17.6px;color:#333;">1. new - selected for training</div>
<svg style="position:absolute;left:1183.90px;top:636.70px;overflow:visible" width="30" height="31" viewBox="0 0 30 31"><circle cx="15.1" cy="15.1" r="15.1" fill="#d9d9d9"/><path d="M15.1 15.1 L15.1 0 A15.1 15.1 0 0 1 30.20 15.10 z" fill="#109797"/></svg>
<div class="t " style="left:1227.00px;top:644.65px;font-size:17.6px;color:#333;">2. in training - the corresponding tasks were demonstrated</div>
<svg style="position:absolute;left:1183.90px;top:687.10px;overflow:visible" width="30" height="31" viewBox="0 0 30 31"><circle cx="15.1" cy="15.1" r="15.1" fill="#d9d9d9"/><path d="M15.1 15.1 L15.1 0 A15.1 15.1 0 0 1 15.10 30.20 z" fill="#109797"/></svg>
<div class="t " style="left:1227.00px;top:695.05px;font-size:17.6px;color:#333;">3. beginners - the tasks can be implemented under supervision</div>
<svg style="position:absolute;left:1183.90px;top:737.50px;overflow:visible" width="30" height="31" viewBox="0 0 30 31"><circle cx="15.1" cy="15.1" r="15.1" fill="#d9d9d9"/><path d="M15.1 15.1 L15.1 0 A15.1 15.1 0 1 1 0.00 15.10 z" fill="#109797"/></svg>
<div class="t " style="left:1227.00px;top:745.45px;font-size:17.6px;color:#333;">4. advanced - the tasks can be implemented independently</div>
<svg style="position:absolute;left:1183.90px;top:787.90px;overflow:visible" width="30" height="31" viewBox="0 0 30 31"><circle cx="15.1" cy="15.1" r="15.1" fill="#109797"/></svg>
<div class="t " style="left:1227.00px;top:795.85px;font-size:17.6px;color:#333;">5. professional - other staff can be trained</div>
</div>
<div style="position:absolute;left:0.00px;top:0.00px;width:7.00px;height:1080.00px;background:#000;z-index:80"></div>
<div style="position:absolute;left:1913.00px;top:0.00px;width:7.00px;height:1080.00px;background:#000;z-index:80"></div>
<div style="position:absolute;left:7.00px;top:0.00px;width:1.00px;height:1080.00px;background:#9a9a9a;z-index:80"></div>
<div style="position:absolute;left:1912.00px;top:0.00px;width:1.00px;height:1080.00px;background:#9a9a9a;z-index:80"></div>
</body></html>
